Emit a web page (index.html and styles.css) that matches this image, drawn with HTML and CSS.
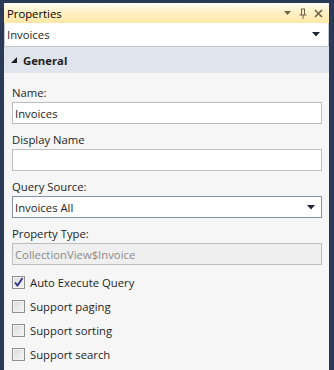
FILE: index.html
```html
<!DOCTYPE html>
<html lang="en">
  <head>
    <meta charset="UTF-8" />
    <title>Properties</title>
    <link rel="stylesheet" href="styles.css">
  </head>
  <body>
    <div class="panel">
      <div class="title-bar">
        <span class="title">Properties</span>
        <div class="title-icons">
          <svg width="8" height="5" viewBox="0 0 8 5"><path d="M0 0h7L3.5 4z" fill="#6f6244" /></svg>
          <svg width="8" height="11" viewBox="0 0 8 11">
            <path d="M2 1h4M2.5 1v6M5.5 1v6M0.5 7h7M4 7v4" stroke="#6f6244" stroke-width="1" fill="none" />
          </svg>
          <svg width="9" height="9" viewBox="0 0 9 9">
            <path d="M1 1l7 7M8 1L1 8" stroke="#6f6244" stroke-width="1.6" />
          </svg>
        </div>
      </div>
      <div class="object-select">
        <span>Invoices</span>
        <svg class="arrow" width="8" height="5" viewBox="0 0 8 5"><path d="M0 0h8L4 4.5z" fill="#1e2738" /></svg>
      </div>
      <div class="group-header">
        <svg width="6" height="6" viewBox="0 0 6 6"><path d="M6 0v6H0z" fill="#1e1e1e" /></svg>
        <span>General</span>
      </div>
      <div class="content">
        <div class="field">
          <label>Name:</label>
          <div class="text-box">Invoices</div>
        </div>
        <div class="field">
          <label>Display Name</label>
          <div class="text-box"></div>
        </div>
        <div class="field">
          <label>Query Source:</label>
          <div class="text-box combo">
            <span>Invoices All</span>
            <svg class="arrow" width="8" height="5" viewBox="0 0 8 5"><path d="M0 0h8L4 4.5z" fill="#1e2738" /></svg>
          </div>
        </div>
        <div class="field last">
          <label>Property Type:</label>
          <div class="text-box disabled">CollectionView$Invoice</div>
        </div>
        <div class="checks">
          <div class="check-row">
            <span class="box">
              <svg width="11" height="11" viewBox="0 0 11 11"><path d="M2 5.5l2.5 3L9.5 1" stroke="#262f8c" stroke-width="1.8" fill="none" /></svg>
            </span>
            Auto Execute Query
          </div>
          <div class="check-row"><span class="box"></span>Support paging</div>
          <div class="check-row"><span class="box"></span>Support sorting</div>
          <div class="check-row"><span class="box"></span>Support search</div>
        </div>
      </div>
    </div>
  </body>
</html>
```

FILE: styles.css
```css
* {
  box-sizing: border-box;
}
html,
body {
  height: 100%;
}
body {
  margin: 0;
  padding: 3px 5px 0 4px;
  background-color: #293955;
  background-image: radial-gradient(circle, #34466a 0.6px, transparent 0.8px);
  background-size: 3px 3px;
  font-family: "Open Sans", sans-serif;
  font-size: 11.3px;
  color: #1e1e1e;
}
.panel {
  height: 100%;
  display: flex;
  flex-direction: column;
  background: #f6f6f6;
}
.title-bar {
  height: 20px;
  display: flex;
  align-items: center;
  justify-content: space-between;
  padding: 0 6px 0 3px;
  background: linear-gradient(#fffcf2, #fff1c8 45%, #ffe8a6);
  color: #000;
}
.title-icons {
  display: flex;
  align-items: center;
  gap: 7px;
}
.object-select {
  height: 24px;
  display: flex;
  align-items: center;
  justify-content: space-between;
  padding: 0 8px 0 2px;
  background: #fff;
  border: 1px solid #c4c8cf;
  border-top: none;
}
.group-header {
  height: 26px;
  display: flex;
  align-items: center;
  gap: 6px;
  padding-left: 7px;
  background: #e0e4ec;
  font-weight: 700;
}
.content {
  flex: 1;
  padding: 12px 7px 0 8px;
}
.field {
  margin-bottom: 8px;
}
.field.last {
  margin-bottom: 5px;
}
.field label {
  display: block;
  height: 16px;
  line-height: 16px;
  margin-bottom: 1px;
}
.text-box {
  height: 22px;
  display: flex;
  align-items: center;
  justify-content: space-between;
  padding: 0 6px 0 2px;
  background: #fff;
  border: 1px solid #bdbdbd;
}
.text-box.combo {
  border-color: #8391a9;
}
.text-box.disabled {
  background: #efefef;
  color: #8b8b8b;
}
.check-row {
  height: 24px;
  display: flex;
  align-items: center;
  gap: 5px;
}
.box {
  width: 13px;
  height: 13px;
  display: flex;
  align-items: center;
  justify-content: center;
  border: 1px solid #8e8f8f;
  background: linear-gradient(135deg, #dcdcdc, #f6f6f6);
  box-shadow: inset 0 0 0 1px #f4f4f4;
}
```
